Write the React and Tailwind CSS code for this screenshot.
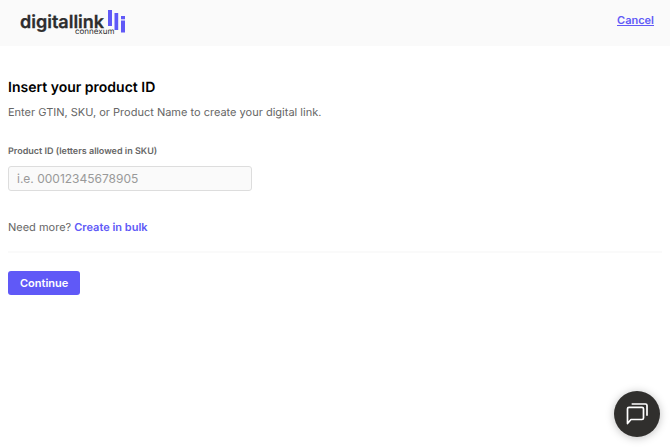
import { useState } from "react";

function Logo() {
  return (
    <svg width="108" height="28" viewBox="0 0 108 28" role="img" aria-label="digitallink connexum">
      <text x="0" y="20" fontSize="18" fontWeight="600" fill="#2d2d2d" stroke="#2d2d2d" strokeWidth="0.3">digitallink</text>
      <text x="55" y="26" fontSize="8" fill="#2d2d2d">connexum</text>
      <g fill="#6059f7">
        <rect x="88" y="2" width="4" height="16" />
        <rect x="94.500" y="5" width="3.700" height="17" />
        <rect x="101" y="8" width="4" height="3.300" />
        <rect x="101" y="12.500" width="4" height="12" />
      </g>
    </svg>
  );
}

function ChatIcon() {
  return (
    <svg width="24" height="24" viewBox="0 0 24 24" fill="none" stroke="#fff" strokeWidth="1.7" strokeLinejoin="round" strokeLinecap="square">
      <path d="M2.500 21.500V6.800a1.500 1.500 0 0 1 1.500-1.500h13a1.500 1.500 0 0 1 1.500 1.500v9.200a1.500 1.500 0 0 1-1.500 1.500H6z" />
      <path d="M7.500 2H20.500a1.500 1.500 0 0 1 1.500 1.500v9.500" />
    </svg>
  );
}

function App() {
  const [productId, setProductId] = useState("");

  return (
    <div className="min-h-screen bg-white font-['Inter',sans-serif] text-[11px] text-[#666666] [text-rendering:geometricPrecision]">
      <header className="flex h-[46px] items-start justify-between bg-[#fafafa] pt-2 pr-4 pl-5">
        <Logo />
        <a href="#" className="mt-1 text-[11px] leading-4 font-semibold text-[#6059f7] underline">
          Cancel
        </a>
      </header>

      <main className="px-2 pt-8">
        <h1 className="text-[14px] leading-5 font-semibold text-black">Insert your product ID</h1>
        <p className="mt-1 leading-5">Enter GTIN, SKU, or Product Name to create your digital link.</p>

        <form onSubmit={(e) => e.preventDefault()}>
          <label htmlFor="product-id" className="mt-[22px] block text-[9px] leading-4 font-semibold">
            Product ID (letters allowed in SKU)
          </label>
          <input
            id="product-id"
            type="text"
            value={productId}
            onChange={(e) => setProductId(e.target.value)}
            placeholder="i.e. 00012345678905"
            className="mt-[6px] block h-[25px] w-full max-w-[244px] rounded-[3px] border border-[#dddddd] bg-[#fafafa] px-2 text-[12px] text-black placeholder:text-[#999999] focus:border-[#6059f7] focus:outline-none"
          />

          <p className="mt-[26px] leading-5">
            Need more?{" "}
            <a href="#" className="font-semibold text-[#6059f7]">
              Create in bulk
            </a>
          </p>

          <hr className="mt-[14px] border-t-2 border-[#fafafa]" />

          <button
            type="submit"
            className="mt-[18px] block h-6 rounded-[3px] bg-[#6059f7] px-3 text-[11px] font-semibold text-white hover:bg-[#4f48e0]"
          >
            Continue
          </button>
        </form>
      </main>

      <button
        type="button"
        aria-label="Open chat"
        className="fixed right-[10px] bottom-[10px] flex size-[46px] items-center justify-center rounded-full bg-[#302f2d] shadow-[0_1px_8px_rgba(0,0,0,0.25)]"
      >
        <ChatIcon />
      </button>
    </div>
  );
}

export default App;
